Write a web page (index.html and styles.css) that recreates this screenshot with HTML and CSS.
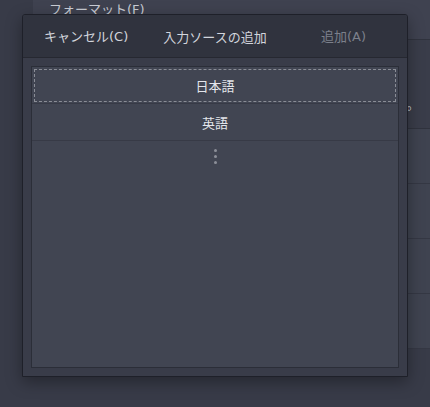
FILE: index.html
```html
<!DOCTYPE html>
<html lang="ja">
<head>
<meta charset="utf-8">
<title>入力ソースの追加</title>
<link rel="stylesheet" href="styles.css">
</head>
<body>
<div class="app">
  <div class="app-side"></div>
  <div class="panel">
    <div class="panel-top">フォーマット(F)</div>
    <div class="panel-desc"><p class="desc-text">追加する入力ソースを選択してください。</p></div>
    <div class="panel-row"></div>
    <div class="panel-row"></div>
    <div class="panel-row"></div>
    <div class="panel-row"></div>
  </div>
</div>

<div class="dialog">
  <div class="dialog-header">
    <span class="btn btn-cancel">キャンセル(C)</span>
    <span class="dialog-title">入力ソースの追加</span>
    <span class="btn btn-add">追加(A)</span>
  </div>
  <div class="dialog-body">
    <div class="list">
      <div class="list-item focused">日本語</div>
      <div class="list-item">英語</div>
      <div class="more">
        <svg width="3" height="15" viewBox="0 0 3 15" aria-hidden="true">
          <circle cx="1.5" cy="1.5" r="1.5" fill="#8c8f99"/>
          <circle cx="1.5" cy="7.5" r="1.5" fill="#8c8f99"/>
          <circle cx="1.5" cy="13.5" r="1.5" fill="#8c8f99"/>
        </svg>
      </div>
    </div>
  </div>
</div>
</body>
</html>
```
FILE: styles.css
```css
html, body {
  margin: 0;
  padding: 0;
}
body {
  width: 430px;
  height: 407px;
  overflow: hidden;
  position: relative;
  background: #383b48;
  font-family: "DejaVu Sans", "Noto Sans CJK JP", sans-serif;
  font-size: 13px;
}

.app {
  display: flex;
  height: 407px;
}
.app-side {
  width: 33px;
  flex: none;
}
.panel {
  flex: 1;
  display: flex;
  flex-direction: column;
}
.panel-top {
  height: 39px;
  flex: none;
  background: #3f4250;
  border-bottom: 1px solid #30333e;
  padding-left: 16px;
  line-height: 20px;
  color: #c9ccd4;
}
.panel-desc {
  height: 88px;
  flex: none;
  background: #3a3d4a;
  border-bottom: 1px solid #30333e;
  overflow: hidden;
}
.desc-text {
  margin: 0;
  padding: 54px 0 0 141px;
  white-space: nowrap;
  line-height: 20px;
  font-family: "Noto Sans CJK JP", sans-serif;
  color: #c9ccd4;
}
.panel-row {
  height: 54px;
  flex: none;
  background: #3f4350;
  border-bottom: 1px solid #353844;
}

.dialog {
  position: absolute;
  left: 22px;
  top: 14px;
  width: 386px;
  height: 363px;
  box-sizing: border-box;
  border: 1px solid #1e2029;
  border-radius: 3px 3px 0 0;
  background: #393c49;
  box-shadow: 0 5px 16px rgba(0, 0, 0, 0.35);
  display: flex;
  flex-direction: column;
}
.dialog-header {
  height: 40px;
  padding-top: 2px;
  flex: none;
  background: #30333e;
  border-bottom: 1px solid #262831;
  border-radius: 2px 2px 0 0;
  display: grid;
  grid-template-columns: 1fr auto 1fr;
  align-items: center;
  color: #d2d5dc;
  line-height: 20px;
}
.btn-cancel {
  justify-self: start;
  margin-left: 21px;
}
.dialog-title {
  font-family: "Noto Sans CJK JP", sans-serif;
}
.btn-add {
  justify-self: end;
  margin-right: 41px;
  color: #7c808b;
}
.dialog-body {
  flex: 1;
  padding: 8px;
  min-height: 0;
}
.list {
  height: 100%;
  box-sizing: border-box;
  border: 1px solid #2b2e38;
  background: #414552;
  display: flex;
  flex-direction: column;
}
.list-item {
  height: 36px;
  flex: none;
  border-bottom: 1px solid #373a46;
  display: flex;
  align-items: center;
  justify-content: center;
  color: #e3e5eb;
  font-family: "Noto Sans CJK JP", sans-serif;
}
.list-item.focused {
  outline: 1px dashed #8a8d96;
  outline-offset: -3px;
}
.more {
  display: flex;
  justify-content: center;
  padding-top: 8px;
}
.more svg {
  display: block;
}
```
